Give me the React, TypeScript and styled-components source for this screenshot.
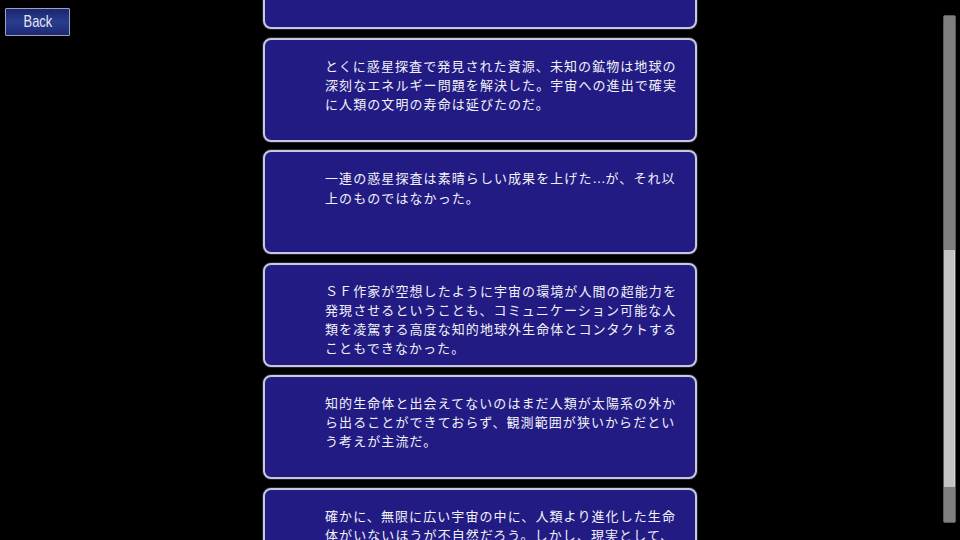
import { useLayoutEffect, useRef } from "react";
import styled, { createGlobalStyle } from "styled-components";

const GlobalStyle = createGlobalStyle`
    html, body {
        margin: 0;
        padding: 0;
        background: #000;
    }
`;

const Screen = styled.div`
    position: relative;
    width: 960px;
    height: 540px;
    overflow: hidden;
    background: #000;
`;

const Viewport = styled.div`
    height: 100%;
    overflow-y: scroll;
    scrollbar-width: none;
    &::-webkit-scrollbar {
        display: none;
    }
`;

const MessageList = styled.div`
    display: flex;
    flex-direction: column;
    align-items: center;
    gap: 8.25px;
    padding-bottom: 40px;
`;

const MessageCard = styled.div`
    box-sizing: border-box;
    width: 434px;
    height: 104.25px;
    flex-shrink: 0;
    padding: 16px 20px 0 60px;
    background: #221b84;
    border: 2px solid #c9c9dc;
    border-radius: 8px;
    box-shadow: 0 0 0 1px rgba(60, 60, 90, 0.6);
`;

const MessageLine = styled.div`
    font-family: "Noto Sans CJK JP", "Noto Sans", sans-serif;
    font-size: 13px;
    line-height: 19px;
    letter-spacing: 1.08px;
    color: #f2f2f6;
    white-space: nowrap;
`;

const Dots = styled.span`
    font-family: "DejaVu Sans", sans-serif;
    letter-spacing: 0;
`;

const BackButton = styled.button`
    position: absolute;
    left: 5px;
    top: 8px;
    width: 65px;
    height: 28px;
    padding: 0;
    border: 1px solid #9aa2bc;
    border-radius: 1px;
    background: linear-gradient(180deg, #1b2670 0%, #2a3c8e 50%, #1d2a74 100%);
    color: #e4e6f2;
    font-family: "Liberation Sans", sans-serif;
    font-size: 17px;
    cursor: pointer;
`;

const BackLabel = styled.span`
    display: inline-block;
    transform: scaleX(0.76);
`;

const ScrollTrack = styled.div`
    position: absolute;
    right: 4px;
    top: 15px;
    width: 13px;
    height: 508px;
    box-sizing: border-box;
    background: #7f7f7f;
    border: 1px solid #5a5a5a;
    border-radius: 2px;
`;

const ScrollThumb = styled.div<{ $offset: number; $size: number }>`
    margin-top: ${(p) => p.$offset}px;
    height: ${(p) => p.$size}px;
    background: #c4c4c4;
    border-right: 1px solid #d8d8d8;
    border-radius: 1px;
`;

const messages: React.ReactNode[][] = [
    [
        "人類が宇宙へと進出してから、すでに長い年月が過",
        "ぎた。",
    ],
    [
        "とくに惑星探査で発見された資源、未知の鉱物は地球の",
        "深刻なエネルギー問題を解決した。宇宙への進出で確実",
        "に人類の文明の寿命は延びたのだ。",
    ],
    [
        <>一連の惑星探査は素晴らしい成果を上げた<Dots>…</Dots>が、それ以</>,
        "上のものではなかった。",
    ],
    [
        "ＳＦ作家が空想したように宇宙の環境が人間の超能力を",
        "発現させるということも、コミュニケーション可能な人",
        "類を凌駕する高度な知的地球外生命体とコンタクトする",
        "こともできなかった。",
    ],
    [
        "知的生命体と出会えてないのはまだ人類が太陽系の外か",
        "ら出ることができておらず、観測範囲が狭いからだとい",
        "う考えが主流だ。",
    ],
    [
        "確かに、無限に広い宇宙の中に、人類より進化した生命",
        "体がいないほうが不自然だろう。しかし、現実として、",
        "人類はいまだに孤独なままだった。",
    ],
];

export default function App() {
    const viewportRef = useRef<HTMLDivElement>(null);

    // 既読ログの途中までスクロールした状態を再現
    useLayoutEffect(() => {
        if (viewportRef.current) {
            viewportRef.current.scrollTop = 75;
        }
    }, []);

    return (
        <>
            <GlobalStyle />
            <Screen>
                <Viewport ref={viewportRef}>
                    <MessageList>
                        {messages.map((lines, i) => (
                            <MessageCard key={i}>
                                {lines.map((line, j) => (
                                    <MessageLine key={j}>{line}</MessageLine>
                                ))}
                            </MessageCard>
                        ))}
                    </MessageList>
                </Viewport>
                <BackButton>
                    <BackLabel>Back</BackLabel>
                </BackButton>
                <ScrollTrack>
                    <ScrollThumb $offset={234} $size={237} />
                </ScrollTrack>
            </Screen>
        </>
    );
}
